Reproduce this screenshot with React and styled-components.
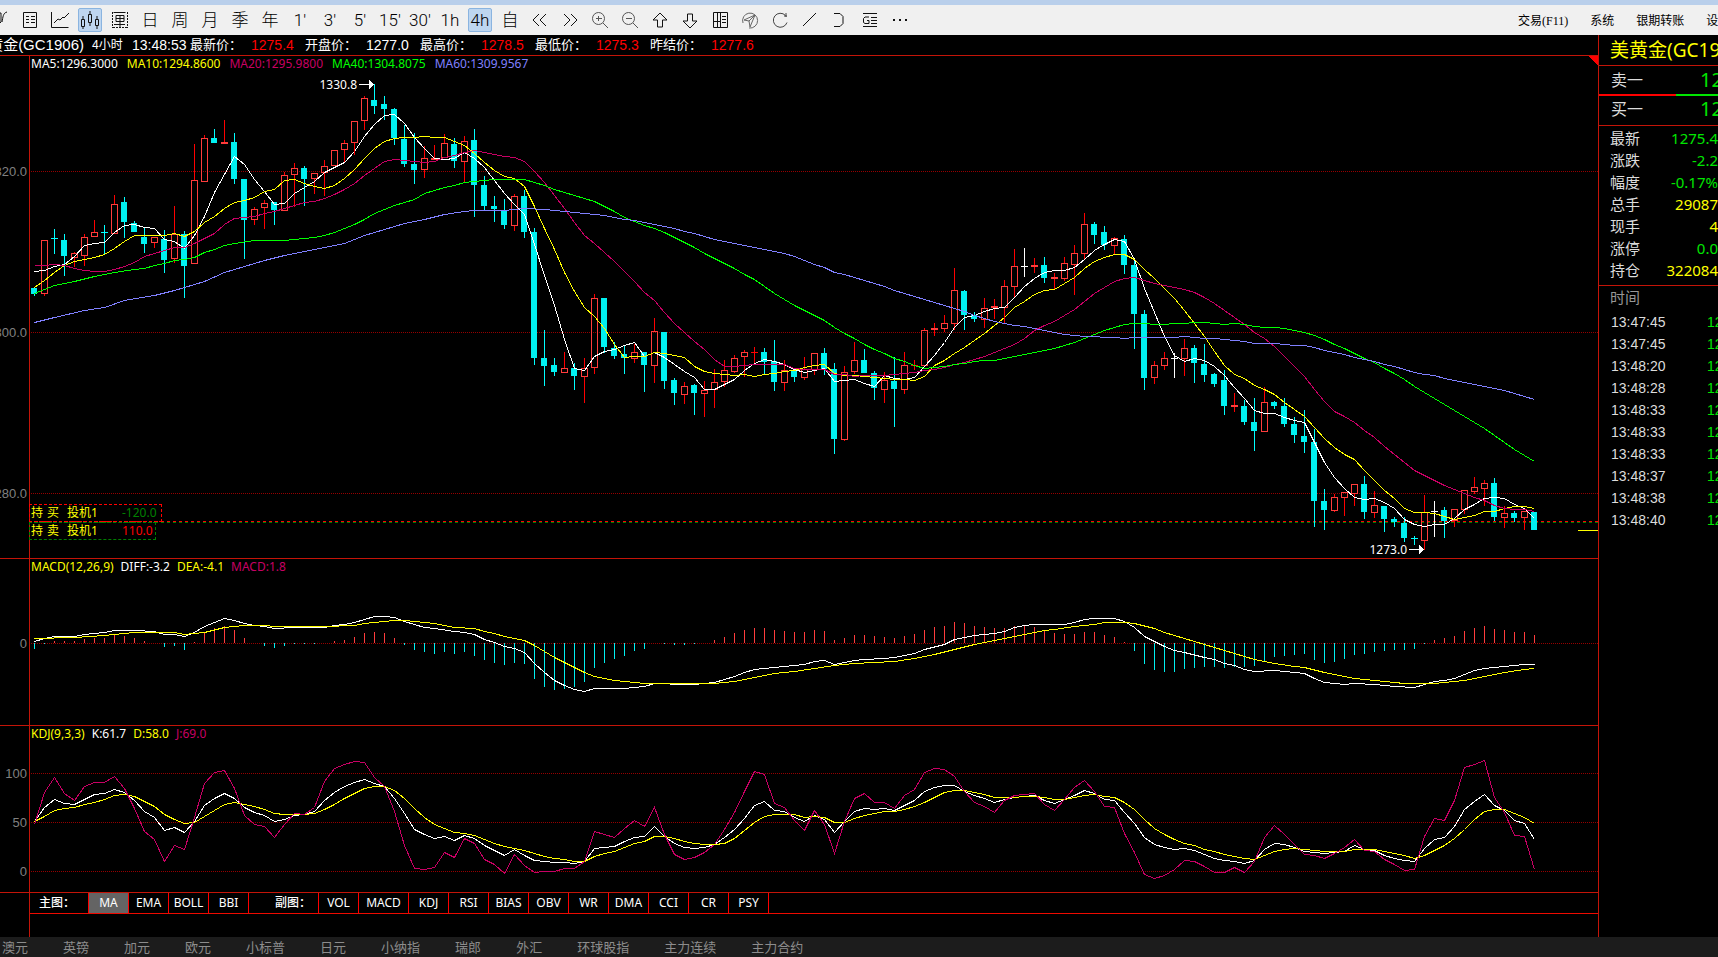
import React from 'react';
import styled, { createGlobalStyle } from 'styled-components';

const STEP = 10;
const FIRST_X = 34;

// kind, high, top, bottom, low
const CANDLES = `
d 288 288 294 296|u 240 240 294 296|c 229 238 238 254|d 234 240 256 276|u 252 253 258 267
u 234 237 256 266|u 220 232 237 237|c 225 232 232 254|u 195 204 234 234|d 197 202 222 238
d 221 223 232 232|d 228 237 244 253|u 237 237 243 248|d 230 239 260 273|u 206 234 259 263
d 231 234 266 298|u 144 180 264 264|u 135 138 182 182|d 129 138 143 143|u 120 142 144 144
d 133 142 179 184|d 179 179 220 259|u 207 209 220 225|u 200 203 208 229|d 202 202 210 225
u 172 175 211 211|u 163 168 175 207|d 166 168 179 206|u 173 173 179 194|u 160 166 173 196
u 150 150 166 166|u 140 143 150 163|u 121 121 143 155|u 96 98 121 130|d 84 100 106 114
d 96 104 109 120|d 108 109 138 145|d 125 139 164 167|d 133 164 170 184|u 146 158 170 178
u 145 158 160 160|u 134 143 158 158|d 138 144 161 168|u 136 141 162 183|d 129 140 185 217
d 176 185 206 210|d 196 206 209 222|d 199 211 225 229|u 194 196 226 231|d 190 196 232 238
d 228 232 358 365|d 330 358 366 386|d 358 365 372 376|u 352 368 373 373|d 363 368 376 390
u 358 368 377 403|u 294 298 368 374|d 298 298 347 353|d 342 348 356 359|d 345 354 358 374
u 344 352 359 363|d 352 352 365 392|u 318 331 366 383|d 332 332 381 389|d 378 380 393 405
u 382 386 395 404|d 384 385 393 415|u 381 390 394 417|u 369 382 390 408|u 360 370 382 387
u 355 358 372 373|u 350 352 357 377|r 347 352 352 364|d 348 352 362 375|d 340 361 382 391
u 360 370 383 391|d 368 370 377 382|u 357 369 378 380|u 353 353 370 375|d 348 353 369 375
d 363 369 439 454|u 366 372 440 441|u 342 360 372 374|d 349 360 373 373|d 371 373 388 400
u 372 380 390 403|d 357 381 389 427|u 352 365 390 394|r 360 365 365 370|u 328 330 366 366
u 323 328 330 336|u 315 323 329 332|u 268 290 324 330|d 290 291 315 330|d 312 315 319 322
u 298 308 320 328|u 299 306 308 319|u 280 286 308 324|u 249 266 287 297|w 248 266 266 277
u 258 265 267 273|d 257 265 278 283|u 273 277 279 290|u 257 263 279 281|u 245 253 265 295
u 213 224 254 259|d 222 224 235 244|d 226 232 245 250|u 237 238 246 254|d 235 239 265 274
d 260 265 314 349|d 310 314 378 390|u 361 365 378 384|u 352 358 366 370|w 353 358 358 378
u 339 348 359 376|d 345 348 363 383|d 344 364 375 382|d 373 374 384 387|d 370 380 406 415
u 393 405 407 412|d 400 406 422 425|d 398 422 431 451|u 387 402 432 432|d 401 402 406 409
d 398 406 424 427|d 417 424 435 443|d 410 436 442 453|d 429 442 501 527|d 489 501 510 530
u 494 497 511 512|u 492 492 498 516|u 484 484 494 506|d 476 484 512 519|u 491 505 513 518
d 506 506 519 532|d 517 519 522 527|d 517 523 538 542|c 536 538 538 545|u 495 512 541 550
w 501 511 511 537|d 507 510 521 538|u 509 509 521 527|u 490 490 510 514|u 477 487 492 494
u 480 483 489 506|d 478 483 517 521|u 506 513 518 528|d 511 513 518 522|u 511 511 518 530
d 512 512 530 530`
  .trim()
  .split(/[\n|]/)
  .map(row => {
    const [kind, high, top, bottom, low] = row.split(' ');
    return { kind, high: +high, top: +top, bottom: +bottom, low: +low };
  });

const HIST = [
  -6, -1, 2, 2, 2, 4, 5, 5, 8, 7,
  5, 2, 0, -4, -3, -7, 1, 11, 15, 17,
  13, 5, 0, -3, -5, -3, -1, -1, -1, 0,
  2, 3, 6, 10, 11, 10, 5, -2, -7, -9,
  -11, -9, -11, -9, -13, -17, -20, -22, -20, -21,
  -36, -44, -47, -46, -44, -39, -25, -20, -16, -13,
  -8, -6, 0, -1, -2, -2, -1, 0, 3, 6,
  10, 13, 15, 15, 13, 12, 11, 11, 13, 12,
  3, 5, 8, 8, 7, 6, 5, 7, 9, 13,
  16, 17, 21, 20, 17, 16, 15, 15, 17, 17,
  16, 12, 10, 9, 9, 11, 11, 8, 6, 1,
  -8, -21, -27, -29, -29, -26, -25, -24, -24, -25,
  -24, -24, -23, -18, -14, -13, -12, -11, -17, -20,
  -19, -16, -12, -11, -9, -8, -7, -7, -6, -1,
  3, 5, 7, 12, 15, 17, 14, 13, 11, 11, 8,
];

const parse = text => text.trim().split(/\s+/).map(p => p.split(',').map(Number));

// the averages need earlier bars than the visible ones, so their left ends are given
const MA_LINES = [
  { n: 5, color: '#ffffff', head: '0,271 1,270 2,266 3,264' },
  { n: 10, color: '#ffff00', head: '0,287 1,280 2,272 3,265 4,261 5,259 6,257 7,254 8,248' },
  {
    n: 20,
    color: '#c80064',
    head: '0,265 1,265 2,264 3,265 4,268 5,270 6,271 7,271 8,269 9,266 10,262 11,256 12,253 13,250 14,247 15,247 16,243 17,238 18,233',
  },
  {
    n: 40,
    color: '#00ff00',
    head: '0,293 1,289 2,285 3,283 4,281 6,276 8,272 10,269 11,268 12,265 13,263 14,260 15,259 16,257 17,252 18,249 19,245 20,243 22,240 25,240 28,237 29,235 30,232 31,228 32,224 33,219 34,213 35,209 36,205 37,202 38,199',
  },
  {
    n: 60,
    color: '#8080ff',
    head: '0,322 2,317 5,310 7,307 9,300 12,295 14,290 17,281 19,272 21,266 23,260 25,255 27,251 29,247 31,243 33,235 35,229 37,223 39,219 41,214 43,211 44,210 47,210 49,208 51,209 53,211 55,213 57,215 58,217',
  },
];

const closes = CANDLES.map(c => (c.kind === 'd' ? c.bottom : c.top));

const average = ({ n, head }) => {
  const points = parse(head);
  for (let i = n - 1; i < closes.length; i += 1) {
    const sum = closes.slice(i - n + 1, i + 1).reduce((a, b) => a + b, 0);
    points.push([i, Math.round(sum / n)]);
  }
  return points;
};

const DIFF = parse(`0,641 1,638 2,636 4,636 5,634 7,632 8,630 10,630 12,631 13,634 14,634 15,636 16,632 17,626 18,622
19,618 20,620 21,623 22,625 23,626 24,628 26,627 29,627 30,625 31,624 32,622 33,619 34,616 35,616 36,617 37,621
38,624 39,627 40,628 42,631 43,632 44,634 45,639 46,642 47,646 48,648 49,652 50,663 51,672 52,680 53,685 54,689
55,691 56,688 59,688 60,687 61,686 62,683 63,683 64,684 66,684 67,683 68,682 69,679 70,676 71,672 72,669 73,668
74,667 75,666 77,664 78,661 79,660 80,664 81,662 82,660 83,659 85,658 86,657 87,655 88,653 89,649 91,644 92,639
93,637 94,635 96,633 97,631 98,627 99,625 100,624 103,624 104,622 105,619 106,618 108,618 109,621 110,627
111,636 112,641 113,646 114,650 115,652 117,657 118,659 119,663 120,665 121,669 122,671 124,670 126,672 127,673
128,678 129,682 131,684 132,683 134,684 136,686 138,687 139,684 140,681 141,680 142,678 143,674 144,670 145,668
147,666 148,665 149,664 150,664`);

const DEA = parse(`0,638 4,637 7,635 9,633 10,632 14,632 15,634 16,633 17,632 19,627 21,625 23,625 24,626 29,626 32,625
33,623 35,621 36,620 37,620 39,622 40,623 42,627 44,628 45,631 46,633 47,636 48,638 49,640 50,645 51,651 52,657
53,662 54,667 55,672 56,676 57,678 58,680 60,682 61,683 68,683 70,681 72,677 74,673 76,671 78,668 80,665 82,663
84,662 86,661 88,658 90,654 92,649 94,644 96,640 98,636 100,632 101,630 102,629 104,626 106,624 107,622 109,622
110,623 112,628 113,632 115,638 117,644 119,650 121,656 122,659 124,663 126,666 127,667 129,672 132,678 135,681
137,683 140,683 141,682 143,680 145,676 147,672 149,669 150,668`);

const KDJ_K = parse(`0,821 1,807 2,799 3,803 4,804 5,799 6,794 7,793 8,789 9,792 10,800 11,811 12,817 13,830 14,827
15,832 16,821 17,805 18,798 19,793 20,798 21,807 22,812 23,815 24,821 25,819 26,815 27,814 28,811 29,800 30,792
31,786 32,782 33,779 34,783 35,786 36,798 37,813 38,829 39,834 40,838 41,836 42,840 43,835 44,838 45,845 46,850
47,855 48,849 49,855 50,860 51,861 52,862 53,862 54,863 55,861 56,848 57,847 58,846 59,841 60,837 61,836 62,826
63,836 64,843 65,847 66,848 67,847 68,844 69,837 70,829 71,818 72,805 73,801 74,810 75,811 76,817 77,821 78,815
79,819 80,832 81,821 82,811 83,808 84,809 85,808 86,810 87,805 88,800 89,791 90,787 91,785 92,785 93,791 94,795
95,798 96,802 97,799 98,797 99,796 100,795 101,800 102,803 103,799 104,795 105,790 106,793 107,799 108,800
109,812 110,823 111,837 112,844 113,847 114,849 115,848 116,850 117,854 118,858 119,860 120,861 121,863 122,860
123,849 124,843 125,844 126,847 127,851 128,852 129,853 130,852 131,851 132,845 133,849 134,850 135,855 136,858
137,860 138,861 139,848 140,839 141,837 142,826 143,809 144,801 145,794 146,805 147,810 148,820 149,823 150,839`);

const KDJ_D = parse(`0,821 1,816 2,810 3,808 4,807 5,804 6,802 7,799 8,795 9,794 10,796 11,801 12,806 13,814 14,819
15,823 16,822 17,816 18,810 19,804 20,802 21,804 22,806 23,809 24,813 25,814 27,814 28,813 29,809 30,804 31,798
32,793 33,788 34,786 35,786 36,790 37,798 38,808 39,817 40,824 41,828 42,832 43,833 44,835 45,839 46,843 47,846
48,848 49,850 50,853 51,856 52,858 53,859 54,861 55,861 56,856 57,853 58,851 59,847 60,843 61,841 62,836 63,836
64,838 65,841 66,843 67,844 68,844 69,843 70,838 71,830 72,822 73,816 74,814 75,814 76,814 77,817 78,816 79,817
80,822 81,822 82,818 83,815 84,813 85,811 86,811 87,809 88,806 89,802 90,797 91,792 92,790 93,790 94,792 95,794
96,797 98,797 99,796 100,796 101,797 102,799 103,799 104,797 105,795 106,794 107,796 108,797 109,802 110,809
111,819 112,828 113,834 114,839 115,843 116,845 117,849 118,851 119,854 120,856 121,858 122,859 123,855 124,851
125,849 126,848 127,849 128,850 129,851 131,851 132,849 134,849 135,851 136,853 137,855 138,858 139,855 140,850
141,845 142,838 143,829 144,819 145,811 146,809 147,809 148,813 149,817 150,823`);

const KDJ_J = parse(`0,824 1,792 2,777 3,793 4,800 5,786 6,782 7,782 8,776 9,788 10,808 11,831 12,839 13,861 14,845
15,849 16,817 17,783 18,772 19,770 20,788 21,815 22,824 23,826 24,837 25,824 26,813 27,814 28,807 29,781 30,768
31,764 32,761 33,762 34,777 35,786 36,811 37,845 38,868 39,869 40,867 41,852 42,857 43,838 44,843 45,859 46,864
47,873 48,854 49,865 50,872 51,871 52,871 53,868 54,868 55,861 56,831 57,834 58,837 59,828 60,820 61,826 62,807
63,834 64,854 65,859 66,857 67,852 68,844 69,829 70,812 71,791 72,771 73,774 74,803 75,807 76,820 77,830 78,810
79,824 80,853 81,821 82,798 83,793 84,802 85,802 86,808 87,795 88,789 89,772 90,768 91,769 92,776 93,791 94,802
95,806 96,812 97,800 98,795 99,794 100,793 101,804 102,810 103,799 104,787 105,780 106,791 107,806 108,807
109,833 110,852 111,874 112,878 113,875 114,869 115,860 116,861 117,866 118,872 119,872 120,867 121,872 122,861
123,837 124,825 125,834 126,844 127,854 128,855 129,858 130,853 131,847 132,839 133,850 134,851 135,859 136,864
137,870 138,869 139,836 140,818 141,820 142,800 143,767 144,764 145,760 146,797 147,812 148,835 149,836 150,869`);

const TOOLS = [
  { id: 'cart', label: '下单' },
  { id: 'list', label: '报价' },
  { id: 'line', label: '分时' },
  { id: 'candle', label: 'K线', active: true },
  { id: 'single', label: '画线' },
  { text: '日' },
  { text: '周' },
  { text: '月' },
  { text: '季' },
  { text: '年' },
  { text: "1'" },
  { text: "3'" },
  { text: "5'" },
  { text: "15'" },
  { text: "30'" },
  { text: '1h' },
  { text: '4h', active: true },
  { text: '自' },
  { id: 'prev', label: '后退' },
  { id: 'next', label: '前进' },
  { id: 'zoomIn', label: '放大' },
  { id: 'zoomOut', label: '缩小' },
  { id: 'up', label: '上移' },
  { id: 'down', label: '下移' },
  { id: 'layout', label: '布局' },
  { id: 'send', label: '发送' },
  { id: 'refresh', label: '刷新' },
  { id: 'slash', label: '直线' },
  { id: 'bracket', label: '磁吸' },
  { id: 'ge', label: '公式' },
  { id: 'more', label: '更多' },
];

const QUOTES = [
  ['最新价：', '1275.4', '#ff0000'],
  ['开盘价：', '1277.0', '#ffffff'],
  ['最高价：', '1278.5', '#ff0000'],
  ['最低价：', '1275.3', '#ff0000'],
  ['昨结价：', '1277.6', '#ff0000'],
];

const STATS = [
  ['最新', '1275.4', '#00e600'],
  ['涨跌', '-2.2', '#00e600'],
  ['幅度', '-0.17%', '#00e600'],
  ['总手', '29087', '#ffff00'],
  ['现手', '4', '#ffff00'],
  ['涨停', '0.0', '#00e600'],
  ['持仓', '322084', '#ffff00'],
];

const TICKS = [
  '13:47:45', '13:47:45', '13:48:20', '13:48:28', '13:48:33',
  '13:48:33', '13:48:33', '13:48:37', '13:48:38', '13:48:40',
];

const MAIN_TABS = ['MA', 'EMA', 'BOLL', 'BBI'];
const SUB_TABS = ['VOL', 'MACD', 'KDJ', 'RSI', 'BIAS', 'OBV', 'WR', 'DMA', 'CCI', 'CR', 'PSY'];
const MARKETS = [
  '澳元', '英镑', '加元', '欧元', '小标普', '日元',
  '小纳指', '瑞郎', '外汇', '环球股指', '主力连续', '主力合约',
];

const xOf = i => FIRST_X + i * STEP;

const Line = ({ points, color }) => (
  <polyline
    points={points.map(([i, y]) => `${xOf(i) + 0.5},${y + 0.5}`).join(' ')}
    fill="none"
    stroke={color}
  />
);

const Candle = ({ x, kind, high, top, bottom, low }) => {
  const wick = { u: '#ff0000', r: '#ff0000', d: '#00ffff', c: '#00ffff', w: '#ffffff' }[kind];
  return (
    <g>
      {kind === 'u' ? (
        <>
          <rect x={x} y={high} width="1" height={top - high} fill={wick} />
          <rect x={x} y={bottom} width="1" height={low - bottom} fill={wick} />
          <rect x={x - 2.5} y={top + 0.5} width="6" height={bottom - top - 1} fill="none" stroke="#ff3c3c" />
        </>
      ) : (
        <rect x={x} y={high} width="1" height={low - high} fill={wick} />
      )}
      {kind === 'd' && <rect x={x - 3} y={top} width="6" height={bottom - top} fill="#00f0f0" />}
      {'rcw'.includes(kind) && <rect x={x - 3} y={top} width="7" height="1" fill={wick} />}
    </g>
  );
};

const GridLine = ({ y, label }) => (
  <g>
    <text x="27" y={y + 5} textAnchor="end" fill="#808080" fontSize="13" fontFamily="Liberation Sans, sans-serif">
      {label}
    </text>
    <line x1="31" x2="100%" y1={y + 0.5} y2={y + 0.5} stroke="#960000" strokeDasharray="1 1" />
  </g>
);

const PriceMark = ({ x, y, text }) => (
  <g fill="#ffffff">
    <text x={x - 17} y={y + 5} textAnchor="end" fontSize="12" fontFamily="Noto Sans, sans-serif">
      {text}
    </text>
    <rect x={x - 15} y={y} width="12" height="1" />
    <path d={`M${x - 5} ${y - 4}v9l5 -4.5z`} />
  </g>
);

const GLYPHS = {
  cart: <path d="M1 5h12v9l-3 3-3-3H1M14 14c1-5 1-9 5-10M10 17v3" />,
  list: (
    <path d="M5.5 4.5h13v15h-13zM8 8.5h3M13 8.5h4M8 11.5h3M13 11.5h4M8 14.5h3M13 14.5h4" />
  ),
  line: <path d="M3.5 4v15.500h17M6 15l4-4 2 1 3-3 1 1 5-5" />,
  candle: (
    <path d="M3.500 11.500h3v7h-3zM5 8v3M5 19v2M10.500 6.500h3v8h-3zM12 3v3M12 15v3M17.500 11.500h3v6h-3zM19 8v3M19 18v3" />
  ),
  single: (
    <>
      <path d="M5.500 4.500h12M8 7.500h8v6H8zM8 10.500h8M12 7v12M6 16.500h11" />
      <path d="M4.500 4v16M19.500 4v16M5 19.500h14" strokeDasharray="2 1" />
    </>
  ),
  prev: <path d="M11 6l-6 6 6 6M18 6l-6 6 6 6" />,
  next: <path d="M6 6l6 6-6 6M13 6l6 6-6 6" />,
  zoomIn: <path d="M16.500 10.500a6 6 0 1 1-12 0a6 6 0 1 1 12 0M15 15l5 5M8 10.500h6M10.500 8v5" stroke="#555" />,
  zoomOut: <path d="M16.500 10.500a6 6 0 1 1-12 0a6 6 0 1 1 12 0M15 15l5 5M8 10.500h6" stroke="#555" />,
  up: <path d="M12 5l7 7h-4.500v7h-5v-7H5z" />,
  down: <path d="M12 20l7-7h-4.500V6h-5v7H5z" />,
  layout: <path d="M5.500 4.500h14v15h-14zM12.500 5v14M6 13.500h6M14 8.500h4M14 11.500h4M14 14.500h4M9.500 5v14" />,
  send: <path d="M5 15a7.500 7.500 0 1 1 6 5M6 12l11-5-5 12-1-6zM17 7l-6 6" stroke="#666" />,
  refresh: <path d="M17.500 7.500a7 7 0 1 0 1.500 7M18 5v4M16 8h3" stroke="#444" />,
  slash: <path d="M5 18L18 5" />,
  bracket: <path d="M6 5.500h6l3 3v7l-3 3H6" />,
  ge: <path d="M5 5.500h14M5 18.500h14M11 9H7L5.500 10.500v4L7 15.500h4v-3H9M13 9.500h6M13 12.500h6M13 15.500h6" />,
  more: <path d="M5 12h2M11 12h2M17 12h2" strokeWidth="2" />,
};

const App = () => {
  return (
    <Page>
      <GlobalStyle />
      <TitleStrip />
      <Toolbar>
        <Tools>
          {TOOLS.map(({ id, text, label, active }) => (
            <Tool key={id || text} type="button" aria-label={label} $active={active}>
              {text || <Glyph viewBox="0 0 24 24">{GLYPHS[id]}</Glyph>}
            </Tool>
          ))}
        </Tools>
        <Menu>
          <MenuItem type="button">交易(F11)</MenuItem>
          <MenuItem type="button">系统</MenuItem>
          <MenuItem type="button">银期转账</MenuItem>
          <MenuItem type="button">设置</MenuItem>
        </Menu>
      </Toolbar>

      <Body>
        <Charts>
          <QuoteBar>
            <Contract>
              <ContractName>美黄金(GC1906)</ContractName>
            </Contract>
            <Period>4小时</Period>
            <Clock>13:48:53</Clock>
            {QUOTES.map(([name, value, color]) => (
              <Quote key={name}>
                <QuoteName>{name}</QuoteName>
                <QuoteValue $color={color}>{value}</QuoteValue>
              </Quote>
            ))}
          </QuoteBar>

          <Pane>
            <Legend $gap={9}>
              <Tag $color="#ffffff">MA5:1296.3000</Tag>
              <Tag $color="#ffff00">MA10:1294.8600</Tag>
              <Tag $color="#c80064">MA20:1295.9800</Tag>
              <Tag $color="#00ff00">MA40:1304.8075</Tag>
              <Tag $color="#8080ff">MA60:1309.9567</Tag>
            </Legend>
            <Plot $height={502}>
              <g transform="translate(0 -56)">
                <GridLine y={171} label="1320.0" />
                <GridLine y={332} label="1300.0" />
                <GridLine y={493} label="1280.0" />
                <line x1="29" x2="100%" y1="521.5" y2="521.5" stroke="#ff0000" strokeDasharray="3 3" />
                <line x1="29" x2="100%" y1="522.5" y2="522.5" stroke="#008000" strokeDasharray="3 3" />
                {CANDLES.map((candle, i) => (
                  <Candle key={i} x={xOf(i)} {...candle} />
                ))}
                {MA_LINES.map(line => (
                  <Line key={line.n} points={average(line)} color={line.color} />
                ))}
                <PriceMark x={374} y={84} text="1330.8" />
                <PriceMark x={1424} y={549} text="1273.0" />
                <svg x="100%" overflow="visible">
                  <path d="M-10 56h10v10z" fill="#ff0000" />
                  <rect x="-20" y="530" width="20" height="1" fill="#ffff00" />
                </svg>
              </g>
            </Plot>
            <Holdings>
              <Holding $color="#ff0000" $width={133}>
                <span>持</span>
                <span>买</span>
                <span>投机1</span>
                <Tag $color="#008000">-120.0</Tag>
              </Holding>
              <Holding $color="#008000" $width={127}>
                <span>持</span>
                <span>卖</span>
                <span>投机1</span>
                <Tag $color="#ff0000">110.0</Tag>
              </Holding>
            </Holdings>
          </Pane>

          <Pane>
            <Legend $gap={7}>
              <Tag $color="#ffff00">MACD(12,26,9)</Tag>
              <Tag $color="#ffffff">DIFF:-3.2</Tag>
              <Tag $color="#ffff00">DEA:-4.1</Tag>
              <Tag $color="#c80064">MACD:1.8</Tag>
            </Legend>
            <Plot $height={166}>
              <g transform="translate(0 -559)">
                <GridLine y={643} label="0" />
                {HIST.map((h, i) => (
                  <rect
                    key={i}
                    x={xOf(i)}
                    y={h > 0 ? 643 - h : 643}
                    width="1"
                    height={Math.abs(h)}
                    fill={h > 0 ? '#ff3c3c' : '#00f0f0'}
                  />
                ))}
                <Line points={DIFF} color="#ffffff" />
                <Line points={DEA} color="#ffff00" />
              </g>
            </Plot>
          </Pane>

          <Pane>
            <Legend $gap={7}>
              <Tag $color="#ffff00">KDJ(9,3,3)</Tag>
              <Tag $color="#ffffff">K:61.7</Tag>
              <Tag $color="#ffff00">D:58.0</Tag>
              <Tag $color="#c80064">J:69.0</Tag>
            </Legend>
            <Plot $height={166}>
              <g transform="translate(0 -726)">
                <GridLine y={773} label="100" />
                <GridLine y={822} label="50" />
                <GridLine y={871} label="0" />
                <Line points={KDJ_K} color="#ffffff" />
                <Line points={KDJ_D} color="#ffff00" />
                <Line points={KDJ_J} color="#c80064" />
              </g>
            </Plot>
          </Pane>

          <Indicators>
            <Tabs>
              <TabLabel $width={58}>主图：</TabLabel>
              {MAIN_TABS.map(name => (
                <Tab key={name} type="button" $active={name === 'MA'}>
                  {name}
                </Tab>
              ))}
              <TabLabel $width={70} $line>副图：</TabLabel>
              {SUB_TABS.map(name => (
                <Tab key={name} type="button" $wide={name === 'MACD'}>
                  {name}
                </Tab>
              ))}
              <TabEnd />
            </Tabs>
          </Indicators>
        </Charts>

        <Side>
          <SideTitle>美黄金(GC1906)</SideTitle>
          <Ask>
            <span>卖一</span>
            <AskPrice>1275.5</AskPrice>
          </Ask>
          <Ratio />
          <Bid>
            <span>买一</span>
            <AskPrice>1275.4</AskPrice>
          </Bid>
          <Stats>
            <tbody>
              {STATS.map(([name, value, color]) => (
                <tr key={name}>
                  <StatName scope="row">{name}</StatName>
                  <StatValue $color={color}>{value}</StatValue>
                </tr>
              ))}
            </tbody>
          </Stats>
          <Ticks>
            <thead>
              <tr>
                <TickHead scope="col">时间</TickHead>
              </tr>
            </thead>
            <tbody>
              {TICKS.map((time, i) => (
                <tr key={i}>
                  <TickTime>{time}</TickTime>
                  <TickPrice>1275.4</TickPrice>
                </tr>
              ))}
            </tbody>
          </Ticks>
        </Side>
      </Body>

      <Markets>
        {MARKETS.map(name => (
          <Market key={name} type="button">
            {name}
          </Market>
        ))}
      </Markets>
    </Page>
  );
};

export default App;

const FRAME = '#c41408';

const GlobalStyle = createGlobalStyle`
  * {
    box-sizing: border-box;
  }

  body {
    margin: 0;
    background: #000000;
    font-family: 'Noto Sans', 'Noto Sans CJK SC', sans-serif;
    font-size: 12px;
  }

  button {
    padding: 0;
    border: 0;
    background: none;
    color: inherit;
    font: inherit;
    white-space: nowrap;
  }
`;

const Page = styled.div`
  display: flex;
  flex-direction: column;
  min-height: 100vh;
  overflow: hidden;
  color: #ffffff;
`;

const TitleStrip = styled.div`
  height: 5px;
  background: #b9cfeb;
`;

const Toolbar = styled.div`
  display: flex;
  justify-content: space-between;
  align-items: center;
  height: 30px;
  background: #f0f0f0;
  color: #000000;
`;

const Tools = styled.div`
  display: flex;
  gap: 6px;
  margin-left: -12px;
`;

const Tool = styled.button`
  display: flex;
  justify-content: center;
  align-items: center;
  width: 24px;
  height: 24px;
  border: 1px solid ${({ $active }) => ($active ? '#8ab4e0' : 'transparent')};
  border-radius: 2px;
  background: ${({ $active }) => ($active ? '#bed6f0' : 'transparent')};
  font-family: Roboto, 'Noto Sans CJK SC', sans-serif;
  font-size: 17px;
  font-weight: 300;
  line-height: 22px;
`;

const Glyph = styled.svg`
  flex: none;
  width: 24px;
  height: 24px;
  fill: none;
  stroke: #111111;
`;

const Menu = styled.div`
  display: flex;
  flex: none;
  gap: 22px;
  width: 200px;
  overflow: hidden;
`;

const MenuItem = styled.button`
  flex: none;
  font-family: 'Liberation Serif', 'Noto Sans CJK SC', serif;
  font-size: 12px;
`;

const Body = styled.div`
  display: flex;
  flex: 1;
`;

const Charts = styled.div`
  display: flex;
  flex: 1;
  flex-direction: column;
  min-width: 0;
`;

const QuoteBar = styled.div`
  display: flex;
  align-items: center;
  height: 21px;
  border-bottom: 1px solid ${FRAME};
  font-family: 'Liberation Sans', 'Noto Sans CJK SC', sans-serif;
  font-size: 14px;
  line-height: 20px;
  white-space: nowrap;
`;

const Contract = styled.div`
  display: flex;
  justify-content: flex-end;
  width: 84px;
  overflow: hidden;
`;

const ContractName = styled.span`
  flex: none;
  font-size: 15px;
`;

const Period = styled.span`
  width: 48px;
  padding-left: 8px;
  font-size: 12px;
`;

const Clock = styled.span`
  width: 58px;
`;

const Quote = styled.div`
  display: flex;
  width: 115px;
`;

const QuoteName = styled.span`
  width: 61px;
  font-size: 13px;
`;

const QuoteValue = styled.span`
  color: ${({ $color }) => $color};
`;

const Pane = styled.section`
  position: relative;
  border-bottom: 1px solid ${FRAME};
  background: linear-gradient(${FRAME}, ${FRAME}) 29px 0 / 1px 100% no-repeat;
`;

const Plot = styled.svg`
  display: block;
  width: 100%;
  height: ${({ $height }) => $height}px;
  overflow: hidden;
  shape-rendering: crispEdges;
`;

const Legend = styled.div`
  position: absolute;
  top: 0;
  left: 31px;
  display: flex;
  gap: ${({ $gap }) => $gap}px;
  line-height: 16px;
  white-space: nowrap;
`;

const Tag = styled.span`
  color: ${({ $color }) => $color};
`;

const Holdings = styled.div`
  position: absolute;
  bottom: 18px;
  left: 29px;
`;

const Holding = styled.div`
  display: grid;
  grid-template-columns: 16px 20px 55px auto;
  width: ${({ $width }) => $width}px;
  height: 18px;
  padding-left: 1px;
  border: 1px dashed ${({ $color }) => $color};
  color: #ffff00;
  line-height: 16px;
  white-space: nowrap;
`;

const Indicators = styled.div`
  flex: 1;
  margin-left: 29px;
  border-left: 1px solid ${FRAME};
`;

const Tabs = styled.div`
  display: flex;
  height: 21px;
  border-bottom: 1px solid #ee0a00;
  line-height: 20px;
`;

const TabLabel = styled.span`
  width: ${({ $width }) => $width}px;
  padding-left: ${({ $line }) => ($line ? 26 : 9)}px;
  border-left: ${({ $line }) => ($line ? '1px solid #ff0000' : '0')};
  font-weight: 500;
`;

const Tab = styled.button`
  width: ${({ $wide }) => ($wide ? 50 : 40)}px;
  border-left: 1px solid #ff0000;
  background: ${({ $active }) => ($active ? '#646464' : 'transparent')};
`;

const TabEnd = styled.span`
  border-left: 1px solid #ff0000;
`;

const Side = styled.aside`
  flex: none;
  width: 120px;
  border-left: 1px solid ${FRAME};
  overflow: hidden;
  color: #dcdcdc;
  white-space: nowrap;
`;

const SideTitle = styled.div`
  height: 31px;
  padding-left: 11px;
  border-bottom: 1px solid ${FRAME};
  color: #ffff00;
  font-size: 19px;
  line-height: 30px;
`;

const Ask = styled.div`
  display: flex;
  height: 28px;
  padding-left: 12px;
  font-size: 16px;
  line-height: 28px;
`;

const Bid = styled(Ask)`
  height: 30px;
  border-bottom: 1px solid ${FRAME};
  line-height: 26px;
`;

const AskPrice = styled.span`
  margin-left: 57px;
  color: #00e600;
  font-size: 20px;
`;

const Ratio = styled.div`
  height: 2px;
  background: linear-gradient(to right, #ff0000 77px, #00e600 77px);
`;

const Stats = styled.table`
  width: 100%;
  padding: 1px 0 4px;
  border-bottom: 1px solid ${FRAME};
  border-spacing: 0;
  font-size: 15px;
  line-height: 22px;
`;

const StatName = styled.th`
  padding: 0 0 0 11px;
  font-weight: 400;
  text-align: left;
`;

const StatValue = styled.td`
  padding: 0;
  color: ${({ $color }) => $color};
  text-align: right;
`;

const Ticks = styled.table`
  border-spacing: 0;
  font-family: 'Liberation Sans', 'Noto Sans CJK SC', sans-serif;
  font-size: 14px;
  line-height: 22px;
`;

const TickHead = styled.th`
  padding: 1px 0 2px 11px;
  color: #969696;
  font-size: 15px;
  font-weight: 400;
  text-align: left;
`;

const TickTime = styled.td`
  width: 108px;
  min-width: 108px;
  padding: 0 0 0 12px;
`;

const TickPrice = styled.td`
  padding: 0;
  color: #00e600;
`;

const Markets = styled.nav`
  display: flex;
  gap: 35px;
  height: 20px;
  padding-left: 2px;
  background: #1c1c1c;
  color: #8c8c8c;
  font-size: 13px;
  line-height: 20px;
`;

const Market = styled.button`
  flex: none;
`;
